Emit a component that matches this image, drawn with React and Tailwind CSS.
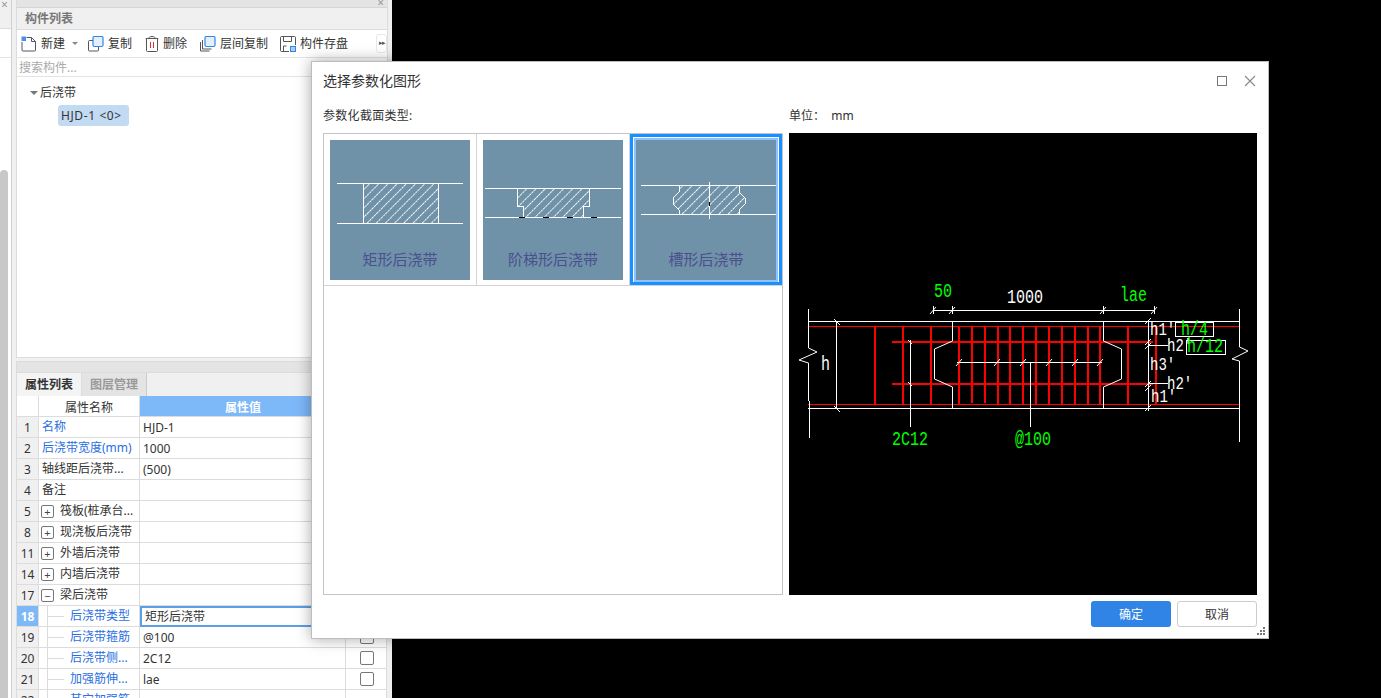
import React from "react";

const FONT = { fontFamily: '"Noto Sans", "Noto Sans CJK SC", sans-serif' };

function Hatch({ id, d, extra }) {
  return (
    <svg width="140" height="100" viewBox="0 0 140 100" className="block">
      <defs>
        <pattern id={id} width="6.5" height="6.5" patternUnits="userSpaceOnUse" patternTransform="rotate(-45)">
          <line x1="0" y1="0.5" x2="6.5" y2="0.5" stroke="#fff" strokeWidth="0.9" strokeDasharray="2.6 0.7" />
        </pattern>
      </defs>
      <path d={d} fill={`url(#${id})`} stroke="#fff" strokeWidth="1" shapeRendering="crispEdges" />
      {extra}
    </svg>
  );
}

function Thumb({ children, label }) {
  return (
    <div className="w-[140px] h-[140px] bg-[#6f92a9] flex flex-col">
      {children}
      <div className="h-[38px] text-[15px] leading-[38px] text-center text-[#4b4f8e]">{label}</div>
    </div>
  );
}

const L = ({ x1, y1, x2, y2, c = "#fff", w = 1 }) => (
  <line x1={x1} y1={y1} x2={x2} y2={y2} stroke={c} strokeWidth={w} />
);

function Diagram() {
  const reds = [875, 903, 931, 959, 972, 985, 998, 1010, 1023, 1036, 1049, 1062, 1075, 1088, 1100, 1128];
  const midTicks = [959, 997, 1023, 1049, 1075, 1100];
  const dimTicks = [933, 952, 1103, 1154];
  const rightTicks = [321, 342, 346, 384, 388, 408];
  const T = ({ x, y, c = "#fff", s = 15, children }) => (
    <text
      transform={`translate(${x} ${y}) scale(1 1.3)`}
      fill={c}
      fontSize={s}
      fontFamily='"Liberation Mono", monospace'
    >
      {children}
    </text>
  );
  const G = "#00ff00";
  return (
    <svg viewBox="789 133 468 462" width="468" height="462" className="block bg-black">
      <g shapeRendering="crispEdges">
        <L x1={808} y1={326.5} x2={1239} y2={326.5} c="#f00" />
        <L x1={808} y1={404.5} x2={1239} y2={404.5} c="#f00" />
        <L x1={892} y1={342} x2={1153} y2={342} c="#f00" w={2} />
        <L x1={892} y1={384} x2={1153} y2={384} c="#f00" w={2} />
        {reds.map((x) => (
          <L key={x} x1={x} y1={326} x2={x} y2={x === 972 || x === 985 ? 403 : 404} c="#f00" w={2} />
        ))}
        <L x1={1156} y1={326} x2={1156} y2={404} c="#f00" w={2} />
        <L x1={808} y1={321.5} x2={1239} y2={321.5} />
        <L x1={808} y1={408.5} x2={1239} y2={408.5} />
        <L x1={836.5} y1={321} x2={836.5} y2={408} />
        <L x1={910.5} y1={340} x2={910.5} y2={427} />
        <L x1={1030.5} y1={362} x2={1030.5} y2={427} />
        <L x1={933} y1={310.5} x2={1154} y2={310.5} />
        <L x1={957} y1={362.5} x2={1102} y2={362.5} />
        <L x1={1148.5} y1={321} x2={1148.5} y2={411} />
        <L x1={1148} y1={345.5} x2={1168} y2={345.5} />
        <L x1={1148} y1={383.5} x2={1168} y2={383.5} />
        <rect x="1175.5" y="322.5" width="38" height="14" fill="none" stroke="#fff" />
        <rect x="1186.5" y="340.5" width="39" height="14" fill="none" stroke="#fff" />
      </g>
      <g fill="none" stroke="#fff" strokeWidth="1">
        <polyline points="808.5,309 808.5,348 817,352 799,360 808.5,363 808.5,401" />
        <line x1="809.5" y1="401" x2="809.5" y2="438" />
        <polyline points="1239.5,309 1239.5,347 1248,351 1232,359 1239.5,361 1239.5,442" />
        <polyline points="952.5,322 952.5,341 934.5,349 934.5,379 952.5,387 952.5,408" />
        <polyline points="1103.5,322 1103.5,341 1121.5,349 1121.5,379 1103.5,387 1103.5,408" />
        <path d="M834 319l6 6M834 406l6 6M908 340l4 4M908 382l4 4" />
        {midTicks.map((x) => (
          <line key={x} x1={x - 3} y1={366} x2={x + 3} y2={359} />
        ))}
        {dimTicks.map((x) => (
          <path key={x} d={`M${x - 3} 314l6-7M${x + 0.5} 306v8`} />
        ))}
        {rightTicks.map((y) => (
          <line key={y} x1={1145} y1={y + 3} x2={1151} y2={y - 3} />
        ))}
      </g>
      <T x={934} y={297} c={G}>50</T>
      <T x={1007} y={303}>1000</T>
      <T x={1120} y={301} c={G}>lae</T>
      <T x={821} y={370}>h</T>
      <T x={1150} y={335} s={14}>h1'</T>
      <T x={1167} y={351} s={14}>h2'</T>
      <T x={1150} y={370} s={14}>h3'</T>
      <T x={1167} y={389} s={14}>h2'</T>
      <T x={1151} y={402} s={14}>h1'</T>
      <T x={1181} y={335} c={G}>h/4</T>
      <T x={1187} y={352} c={G}>h/12</T>
      <T x={892} y={445} c={G}>2C12</T>
      <T x={1015} y={445} c={G}>@100</T>
    </svg>
  );
}

const IconNew = () => (
  <svg width="16" height="16" viewBox="0 0 16 16" className="block shrink-0">
    <path d="M5.5 1.5h5l4 4v8.5a1 1 0 0 1-1 1H2a1 1 0 0 1-1-1V6M10.5 1.5v4h4" fill="none" stroke="#556" />
    <rect x="0.5" y="0.5" width="4.5" height="4.5" fill="#4d8fe6" />
  </svg>
);
const IconCopy = () => (
  <svg width="16" height="16" viewBox="0 0 16 16" className="block shrink-0">
    <rect x="0.5" y="4.5" width="10" height="10.5" rx="1" fill="#fff" stroke="#555" />
    <rect x="5" y="0.5" width="10" height="10" rx="1.5" fill="#e4effc" stroke="#2f86e8" strokeWidth="1.2" />
  </svg>
);
const IconTrash = () => (
  <svg width="14" height="16" viewBox="0 0 14 16" className="block shrink-0">
    <path d="M4 2.5c0-1.5.8-2 3-2s3 .5 3 2M.8 2.5h12.4M1.5 2.5v12a1 1 0 0 0 1 1h9a1 1 0 0 0 1-1v-12" fill="none" stroke="#555" />
    <path d="M5.5 6v6M8.5 6v6" stroke="#e03030" />
  </svg>
);
const IconLayer = () => (
  <svg width="16" height="16" viewBox="0 0 16 16" className="block shrink-0">
    <path d="M.5 6v9h9M2.5 4v9h9" fill="none" stroke="#555" />
    <rect x="5" y="0.5" width="10" height="10" rx="1.5" fill="#e4effc" stroke="#2f86e8" strokeWidth="1.2" />
  </svg>
);
const IconSave = () => (
  <svg width="16" height="16" viewBox="0 0 16 16" className="block shrink-0">
    <path d="M9 15.5H1.5a1 1 0 0 1-1-1v-13a1 1 0 0 1 1-1h13a1 1 0 0 1 1 1V9M3.5 1v4.5h8V1M3.5 15v-5h3" fill="none" stroke="#555" />
    <rect x="10.5" y="10.5" width="5" height="5" fill="#a8cff8" stroke="#2f86e8" />
  </svg>
);

const Tool = ({ icon, label, className }) => (
  <div className={`flex items-center gap-[4px] whitespace-nowrap ${className}`}>
    {icon}
    <span className="pt-[1px]">{label}</span>
  </div>
);

const BLUE = "text-[#2a6fe0]";

const rows = [
  { n: 1, name: "名称", v: "HJD-1", blue: true },
  { n: 2, name: "后浇带宽度(mm)", v: "1000", blue: true },
  { n: 3, name: "轴线距后浇带...", v: "(500)" },
  { n: 4, name: "备注" },
  { n: 5, name: "筏板(桩承台...", box: "+" },
  { n: 8, name: "现浇板后浇带", box: "+" },
  { n: 11, name: "外墙后浇带", box: "+" },
  { n: 14, name: "内墙后浇带", box: "+" },
  { n: 17, name: "梁后浇带", box: "−" },
  { n: 18, name: "后浇带类型", v: "矩形后浇带", child: true, sel: true },
  { n: 19, name: "后浇带箍筋", v: "@100", child: true, check: true },
  { n: 20, name: "后浇带侧...", v: "2C12", child: true, check: true },
  { n: 21, name: "加强筋伸...", v: "lae", child: true, check: true },
  { n: 22, name: "其它加强筋", child: true },
];

function Row({ r }) {
  return (
    <div className="flex h-[21px] shrink-0 border-b border-[#dcdcdc] leading-[22px]">
      <div
        className={`w-[22px] shrink-0 border-r border-[#dcdcdc] text-center ${
          r.sel ? "bg-[#7db8f8] text-white font-bold" : "bg-[#f0f0f0]"
        }`}
      >
        {r.n}
      </div>
      <div className="w-[101px] shrink-0 border-r border-[#dcdcdc] flex items-center whitespace-nowrap overflow-hidden">
        {r.child ? (
          <>
            <div className="ml-[8px] w-px h-[21px] bg-[#dcdcdc]" />
            <div className="w-[16px] h-px bg-[#dcdcdc]" />
            <span className={`ml-[6px] ${BLUE}`}>{r.name}</span>
          </>
        ) : r.box ? (
          <>
            <div className="ml-[2px] w-[13px] h-[13px] border border-[#777] rounded-[2px] flex items-center justify-center text-[11px] leading-none text-[#444]">
              {r.box}
            </div>
            <span className="ml-[6px]">{r.name}</span>
          </>
        ) : (
          <span className={`ml-[3px] ${r.blue ? BLUE : ""}`}>{r.name}</span>
        )}
      </div>
      <div className="w-[206px] shrink-0 border-r border-[#dcdcdc] relative pl-[3px]">
        {r.sel ? (
          <div className="absolute left-0 top-0 right-0 h-[21px] border-2 border-[#5a9fe8] bg-white pl-[3px] leading-[18px]">
            {r.v}
          </div>
        ) : (
          r.v
        )}
      </div>
      <div className="w-[41px] shrink-0 flex items-center justify-center">
        {r.check && <div className="w-[14px] h-[14px] border border-[#777] rounded-[2px]" />}
      </div>
    </div>
  );
}

function Sidebar() {
  return (
    <div className="w-[392px] h-[698px] shrink-0 flex bg-[#f0f0f0] overflow-hidden text-[12px] text-[#333]">
      <div className="w-[16px] shrink-0 flex">
        <div className="w-[12px] flex flex-col border-r border-[#d0d0d0] bg-white">
          <div className="h-[29px] shrink-0 bg-[#f0f0f0] text-[#999] leading-[10px] pl-[1px] border-b border-[#dcdcdc]">×</div>
          <div className="h-[29px] shrink-0 border-b border-[#e4e4e4]" />
          <div className="h-[112px] shrink-0" />
          <div className="flex-1 flex">
            <div className="w-[8px] bg-[#c8c8c8] rounded-t-[4px]" />
          </div>
        </div>
      </div>
      <div className="w-[372px] shrink-0 flex flex-col">
        <div className="h-[358px] shrink-0 flex flex-col border-x border-b border-[#dcdcdc] bg-white">
          <div className="h-[8px] shrink-0 bg-[#e4e4e4] border-b border-[#d4d4d4] flex justify-end pr-[3px] text-[#999] leading-[6px]">×</div>
          <div className="h-[22px] shrink-0 bg-[#f0f0f0] border-b border-[#dcdcdc] pl-[8px] leading-[21px] font-bold text-[#777]">构件列表</div>
          <div className="h-[28px] shrink-0 flex items-center border-b border-[#e4e4e4]">
            <Tool className="ml-[4px]" icon={<IconNew />} label="新建" />
            <div className="ml-[7px] border-x-[3px] border-x-transparent border-t-[3px] border-t-[#888]" />
            <Tool className="ml-[10px]" icon={<IconCopy />} label="复制" />
            <Tool className="ml-[13px]" icon={<IconTrash />} label="删除" />
            <Tool className="ml-[13px]" icon={<IconLayer />} label="层间复制" />
            <Tool className="ml-[12px]" icon={<IconSave />} label="构件存盘" />
            <div className="ml-[28px] w-[11px] h-[19px] border border-[#e8e8e8] rounded-[3px] flex items-center justify-center text-[7px] text-[#555] tracking-[-1px]">▸▸</div>
          </div>
          <div className="h-[19px] shrink-0 pl-[2px] leading-[19px] text-[#aaa] border-b border-[#e4e4e4]">搜索构件...</div>
          <div className="h-[20px] mt-[6px] pl-[13px] flex items-center gap-[2px]">
            <div className="border-x-[4px] border-x-transparent border-t-[4px] border-t-[#777]" />
            <span>后浇带</span>
          </div>
          <div className="mt-[2px] ml-[41px] w-[71px] h-[21px] rounded-[3px] bg-[#c3daf3] pl-[3px] leading-[21px] tracking-[0.6px] whitespace-pre">{"HJD-1 <0>"}</div>
        </div>
        <div className="h-[3px] shrink-0" />
        <div className="h-[12px] shrink-0 bg-[#e4e4e4] border border-[#dcdcdc]" />
        <div className="h-[23px] shrink-0 flex border-x border-[#dcdcdc]">
          <div className="w-[65px] leading-[24px] text-center font-bold border-r border-[#dcdcdc] bg-[#f4f4f4] text-[#333]">属性列表</div>
          <div className="w-[65px] leading-[24px] text-center font-bold border-r border-[#ccc] bg-[#e4e4e4] text-[#999]">图层管理</div>
        </div>
        <div className="w-[371px] flex flex-col border-x border-[#dcdcdc] bg-white">
          <div className="flex h-[21px] shrink-0 border-b border-[#dcdcdc] leading-[23px]">
            <div className="w-[22px] shrink-0 border-r border-[#dcdcdc]" />
            <div className="w-[101px] shrink-0 border-r border-[#dcdcdc] text-center">属性名称</div>
            <div className="w-[206px] shrink-0 bg-[#7db8f8] text-white font-bold text-center">属性值</div>
          </div>
          {rows.map((r) => (
            <Row key={r.n} r={r} />
          ))}
        </div>
      </div>
    </div>
  );
}

function Dialog() {
  return (
    <div className="absolute left-[311px] top-[61px] w-[958px] h-[578px] bg-white border border-[#bdbdbd] shadow-[0_0_14px_rgba(0,0,0,0.35)] flex flex-col text-[#333]">
      <div className="h-[37px] shrink-0 flex items-center pl-[11px] pr-[12px] text-[14px]">
        <span>选择参数化图形</span>
        <div className="ml-auto w-[10px] h-[10px] border border-[#777]" />
        <svg width="12" height="12" viewBox="0 0 12 12" className="ml-[17px]">
          <path d="M1 1l10 10M11 1L1 11" stroke="#888" strokeWidth="1.1" />
        </svg>
      </div>
      <div className="h-[34px] shrink-0 flex items-center text-[12px] pl-[11px]">
        <span className="w-[466px] tracking-[0.3px]">参数化截面类型:</span>
        <span className="whitespace-pre">单位：  mm</span>
      </div>
      <div className="h-[462px] shrink-0 flex pl-[11px]">
        <div className="w-[460px] border border-[#c4c4c4] bg-white">
          <div className="flex h-[152px] border-b border-[#d4d4d4]">
            <div className="w-[153px] border-r border-[#d4d4d4] flex items-center justify-center">
              <Thumb label="矩形后浇带">
                <Hatch id="h1" d="M33 43.5H108V83H33Z" extra={<path d="M7 43.5H133M7 83.5H133" stroke="#fff" shapeRendering="crispEdges" />} />
              </Thumb>
            </div>
            <div className="w-[153px] border-r border-[#d4d4d4] flex items-center justify-center">
              <Thumb label="阶梯形后浇带">
                <Hatch
                  id="h2"
                  d="M34 48.5H106V66H100V77H40V66H34Z"
                  extra={
                    <>
                      <path d="M2 48.5H138M2 77.5H138" stroke="#fff" shapeRendering="crispEdges" />
                      <path d="M36 77.5h6M60 77.5h6M84 77.5h6M108 77.5h6" stroke="#000" shapeRendering="crispEdges" />
                    </>
                  }
                />
              </Thumb>
            </div>
            <div className="w-[152px] border-[3px] border-[#1890ff] flex items-center justify-center">
              <div className="border-2 border-[#8cc4ff]">
                <Thumb label="槽形后浇带">
                  <Hatch
                    id="h3"
                    d="M43 45.5H103V52L109 58V64L103 70V74H43V70L37 64V58L43 52Z"
                    extra={
                      <>
                        <path d="M5 45.5H140M5 74.5H140M73.5 42V79" stroke="#fff" shapeRendering="crispEdges" />
                        <path d="M73.5 62v4" stroke="#000" shapeRendering="crispEdges" />
                      </>
                    }
                  />
                </Thumb>
              </div>
            </div>
          </div>
        </div>
        <div className="ml-[6px]">
          <Diagram />
        </div>
      </div>
      <div className="flex-1 flex justify-end pt-[6px] pr-[11px] gap-[6px] text-[12px] relative">
        <div className="w-[80px] h-[26px] rounded-[3px] bg-[#2f84e6] text-white text-center leading-[28px]">确定</div>
        <div className="w-[80px] h-[26px] rounded-[3px] border border-[#ccc] text-center leading-[26px]">取消</div>
        <svg width="8" height="8" viewBox="0 0 8 8" className="absolute right-[3px] bottom-[3px]">
          <path d="M6 0h2v2H6zM3 3h2v2H3zM6 3h2v2H6zM0 6h2v2H0zM3 6h2v2H3zM6 6h2v2H6z" fill="#777" />
        </svg>
      </div>
    </div>
  );
}

export default function App() {
  return (
    <div className="relative w-[1381px] h-[698px] bg-black overflow-hidden" style={FONT}>
      <Sidebar />
      <Dialog />
    </div>
  );
}
